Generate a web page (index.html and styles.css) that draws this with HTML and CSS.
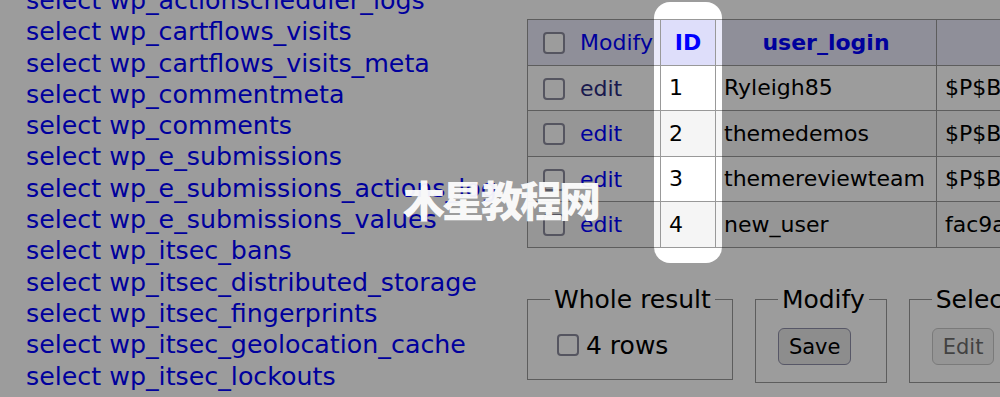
FILE: index.html
```html
<!DOCTYPE html>
<html lang="en">
<head>
    <meta charset="UTF-8">
    <title>Select: wp_users - Adminer</title>
    <link rel="stylesheet" href="styles.css">
</head>
<body>
    <div class="page">
        <div class="menu">
            <ul class="tables">
                <li><a href="#">select</a> <a href="#">wp_actionscheduler_logs</a></li>
                <li><a href="#">select</a> <a href="#">wp_cartflows_visits</a></li>
                <li><a href="#">select</a> <a href="#">wp_cartflows_visits_meta</a></li>
                <li><a href="#">select</a> <a href="#">wp_commentmeta</a></li>
                <li><a href="#">select</a> <a href="#">wp_comments</a></li>
                <li><a href="#">select</a> <a href="#">wp_e_submissions</a></li>
                <li><a href="#">select</a> <a href="#">wp_e_submissions_actions_log</a></li>
                <li><a href="#">select</a> <a href="#">wp_e_submissions_values</a></li>
                <li><a href="#">select</a> <a href="#">wp_itsec_bans</a></li>
                <li><a href="#">select</a> <a href="#">wp_itsec_distributed_storage</a></li>
                <li><a href="#">select</a> <a href="#">wp_itsec_fingerprints</a></li>
                <li><a href="#">select</a> <a href="#">wp_itsec_geolocation_cache</a></li>
                <li><a href="#">select</a> <a href="#">wp_itsec_lockouts</a></li>
            </ul>
        </div>

        <div class="content">
            <table class="results">
                <thead>
                    <tr>
                        <th class="col-check"><span class="check"><input type="checkbox"></span><a href="#">Modify</a></th>
                        <th class="col-id"><a href="#">ID</a></th>
                        <th class="col-login"><a href="#">user_login</a></th>
                        <th class="col-pass"><a href="#">user_pass</a></th>
                    </tr>
                </thead>
                <tbody>
                    <tr>
                        <td class="col-check"><span class="check"><input type="checkbox"></span><a href="#" class="visited">edit</a></td>
                        <td>1</td>
                        <td>Ryleigh85</td>
                        <td>$P$BkT1o7Yx2hQe8sZ0nJc4mVfLw9uRaD.</td>
                    </tr>
                    <tr class="odd">
                        <td class="col-check"><span class="check"><input type="checkbox"></span><a href="#">edit</a></td>
                        <td>2</td>
                        <td>themedemos</td>
                        <td>$P$BqW3dXn5Fh2pR8yGc0LkM6tzE1vJsA/</td>
                    </tr>
                    <tr>
                        <td class="col-check"><span class="check"><input type="checkbox"></span><a href="#">edit</a></td>
                        <td>3</td>
                        <td>themereviewteam</td>
                        <td>$P$B7uYh0Lm3pQx9cVn2KsW4dZgT8rFeE1</td>
                    </tr>
                    <tr class="odd">
                        <td class="col-check"><span class="check"><input type="checkbox"></span><a href="#">edit</a></td>
                        <td>4</td>
                        <td>new_user</td>
                        <td>fac9a4e0b2d71c63f58e9d0a4b7c2e18</td>
                    </tr>
                </tbody>
            </table>

            <div class="actions">
                <fieldset>
                    <legend>Whole result</legend>
                    <label class="all"><span class="check"><input type="checkbox"></span>4 rows</label>
                </fieldset>
                <fieldset>
                    <legend>Modify</legend>
                    <button type="button">Save</button>
                </fieldset>
                <fieldset>
                    <legend>Selected</legend>
                    <button type="button" disabled>Edit</button>
                    <button type="button" disabled>Clone</button>
                    <button type="button" disabled>Delete</button>
                </fieldset>
            </div>
        </div>
    </div>

    <div class="spotlight"></div>
    <div class="watermark">木星教程网</div>
</body>
</html>
```

FILE: styles.css
```css
html,
body {
    margin: 0;
    padding: 0;
    overflow: hidden;
    height: 100%;
}

body {
    font-family: "DejaVu Sans", Verdana, sans-serif;
    font-size: 25px;
    line-height: 1.25;
    background-color: #fff;
    color: #000;
}

a {
    color: #00f;
    text-decoration: none;
}

.page {
    display: flex;
    align-items: flex-start;
}

/* left table list */
.menu {
    flex: 0 0 527px;
    padding-left: 26px;
    box-sizing: border-box;
    white-space: nowrap;
    font-size: 25.3px;
}

.tables {
    list-style: none;
    margin: -15px 0 0;
    padding: 0;
}

.tables li {
    height: 31.3px;
    line-height: 31.3px;
}

/* results */
.content {
    flex: 0 0 auto;
    padding-top: 19px;
}

.results {
    border-collapse: collapse;
    font-size: 22px;
    table-layout: fixed;
    width: 700px;
    white-space: nowrap;
}

.results th,
.results td {
    border: 1px solid #999;
    height: 44.6px;
    padding: 0 8px;
    overflow: hidden;
}

.results thead th {
    background-color: #eaeafa;
    font-weight: bold;
    text-align: center;
}

.results thead .col-check {
    font-weight: normal;
    text-align: left;
}

.results thead .col-id {
    background-color: #dedefa;
}

.results .col-check {
    width: 109px;
    padding-left: 15px;
}

.results .col-id {
    width: 38px;
}

.results .col-login {
    width: 204px;
}

.results .col-pass {
    width: 280px;
}

.results tr.odd td {
    background-color: #f5f5f5;
}

.results a.visited {
    color: #2a2a7e;
}

.check {
    display: inline-block;
    vertical-align: middle;
    margin-right: 15px;
}

.check input {
    appearance: none;
    display: block;
    margin: 0;
    width: 22px;
    height: 22px;
    border: 2px solid #8c8c9e;
    border-radius: 4px;
    background-color: #fff;
    box-sizing: border-box;
}

.results .col-check a {
    vertical-align: middle;
}

/* bottom fieldsets */
.actions {
    display: flex;
    align-items: flex-start;
    gap: 22px;
    margin-top: 36px;
    white-space: nowrap;
}

fieldset {
    margin: 0;
    border: 1px solid #999;
    padding: 13px 17px 17px 22px;
}

legend {
    padding: 0 4px;
}

.all {
    display: flex;
    align-items: center;
    height: 34px;
    padding-left: 7px;
}

.all .check {
    margin-right: 7px;
}

button {
    font-family: "DejaVu Sans", Verdana, sans-serif;
    font-size: 21px;
    height: 37px;
    padding: 0 10px;
    margin-right: 6px;
    border: 1.5px solid #8f8fa8;
    border-radius: 6px;
    background-color: #e6e6e6;
    color: #000;
}

button:disabled {
    border-color: #c8c8c8;
    background-color: #f4f4f4;
    color: #6d6d6d;
}

/* screenshot overlay */
.spotlight {
    position: absolute;
    left: 654px;
    top: 2px;
    width: 68px;
    height: 261px;
    border-radius: 16px;
    box-shadow: 0 0 0 2000px rgba(0, 0, 0, 0.388);
    pointer-events: none;
}

.watermark {
    position: absolute;
    left: 403px;
    top: 174px;
    font-family: "Noto Sans CJK SC", sans-serif;
    font-weight: 900;
    font-size: 42px;
    line-height: 1.2;
    letter-spacing: -3px;
    color: rgba(255, 255, 255, 0.95);
    pointer-events: none;
}
```
